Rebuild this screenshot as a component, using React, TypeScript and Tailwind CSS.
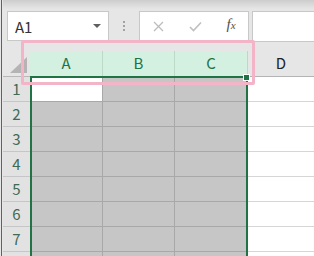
const cols = [
  { id: "A", w: "w-[73px]" },
  { id: "B", w: "w-[72px]" },
  { id: "C", w: "w-[73px]" },
];
const rows = [1, 2, 3, 4, 5, 6, 7, 8];

const Toolbar = () => (
  <div className="flex h-[51px] flex-none items-start bg-[linear-gradient(to_bottom,#cdcdcd_0px,#e6e6e6_9px)] pl-[4px] pt-[11px]">
    <div className="flex h-[30px] w-[102px] flex-none items-center justify-between border border-[#c8c8c8] bg-white pl-[7px] pr-[7px]">
      <span className="text-[15px] leading-none text-[#333]">A1</span>
      <svg width="8" height="5" viewBox="0 0 8 5">
        <path d="M0 0h8L4 4z" fill="#5f5f5f" />
      </svg>
    </div>
    <div className="flex h-[30px] w-[30px] flex-none flex-col items-center justify-center gap-[2px]">
      <span className="h-[2px] w-[2px] bg-[#a3a3a3]" />
      <span className="h-[2px] w-[2px] bg-[#a3a3a3]" />
      <span className="h-[2px] w-[2px] bg-[#a3a3a3]" />
    </div>
    <div className="flex h-[30px] w-[110px] flex-none items-center border border-[#c8c8c8] bg-white">
      <div className="flex w-[36px] justify-center">
        <svg width="11" height="11" viewBox="0 0 11 11">
          <path d="M1 1l9 9M10 1l-9 9" stroke="#bcbcbc" strokeWidth="1.3" />
        </svg>
      </div>
      <div className="flex w-[38px] justify-center">
        <svg width="13" height="11" viewBox="0 0 13 11">
          <path d="M1 6l3.5 3.5L12 1.5" stroke="#bfbfbf" strokeWidth="1.6" fill="none" />
        </svg>
      </div>
      <div className="flex flex-1 justify-center pb-[3px]">
        <span className="font-['Liberation_Serif',serif] text-[15px] italic leading-none text-[#505050]">
          f<span className="text-[11px]">x</span>
        </span>
      </div>
    </div>
    <div className="ml-[3px] h-[31px] flex-1 border border-r-0 border-[#c8c8c8] bg-white" />
  </div>
);

const Sheet = () => (
  <div className="flex flex-col">
    <div className="flex h-[26px]">
      <div className="relative w-[27px] flex-none border-b border-[#b8b8b8]">
        <svg className="absolute left-0 top-0" width="27" height="26" viewBox="0 0 27 26">
          <path d="M7 22H24V6z" fill="#b4b4b4" />
        </svg>
      </div>
      {cols.map((c) => (
        <div
          key={c.id}
          className={`${c.w} flex flex-none items-center justify-center border-b border-r border-b-[#217346] border-r-[#bcd8c6] bg-[#d3f0e0] text-[15px] text-[#217346]`}
        >
          {c.id}
        </div>
      ))}
      <div className="flex flex-1 items-center justify-center border-b border-[#b3b3b3] text-[15px] text-[#222]">
        D
      </div>
    </div>
    {rows.map((r) => (
      <div key={r} className="flex h-[25px]">
        <div className="flex w-[27px] flex-none items-center justify-center border-b border-[#c6c6c6] bg-[#e2e2e2] text-[15px] text-[#3f6a55]">
          {r < 8 ? r : null}
        </div>
        {cols.map((c) => (
          <div
            key={c.id}
            className={`${c.w} flex-none border-b border-r border-[#a8a8a8] ${
              r === 1 && c.id === "A" ? "bg-white" : "bg-[#c6c6c6]"
            }`}
          />
        ))}
        <div className="flex-1 border-b border-[#d6d6d6] bg-white" />
      </div>
    ))}
  </div>
);

export default function App() {
  return (
    <div className="relative flex h-[256px] w-[314px] overflow-hidden bg-[#e6e6e6] font-['Noto_Sans_CJK_JP','Noto_Sans',sans-serif]">
      <div className="flex w-[3px] flex-none justify-center">
        <div className="w-px bg-[#46705b]" />
      </div>
      <div className="flex min-w-0 flex-1 flex-col">
        <Toolbar />
        <Sheet />
      </div>
      {/* selection A1:C */}
      <div className="pointer-events-none absolute left-[30px] top-[76px] h-[200px] w-[218px] border-2 border-b-0 border-[#217346]" />
      <div className="absolute left-[243px] top-[74px] h-[7px] w-[7px] border border-white bg-[#217346]" />
      {/* highlight around column headers */}
      <div className="pointer-events-none absolute left-[21px] top-[40px] h-[45px] w-[234px] rounded-[2px] border-[3px] border-[#f4b4c8]" />
    </div>
  );
}
